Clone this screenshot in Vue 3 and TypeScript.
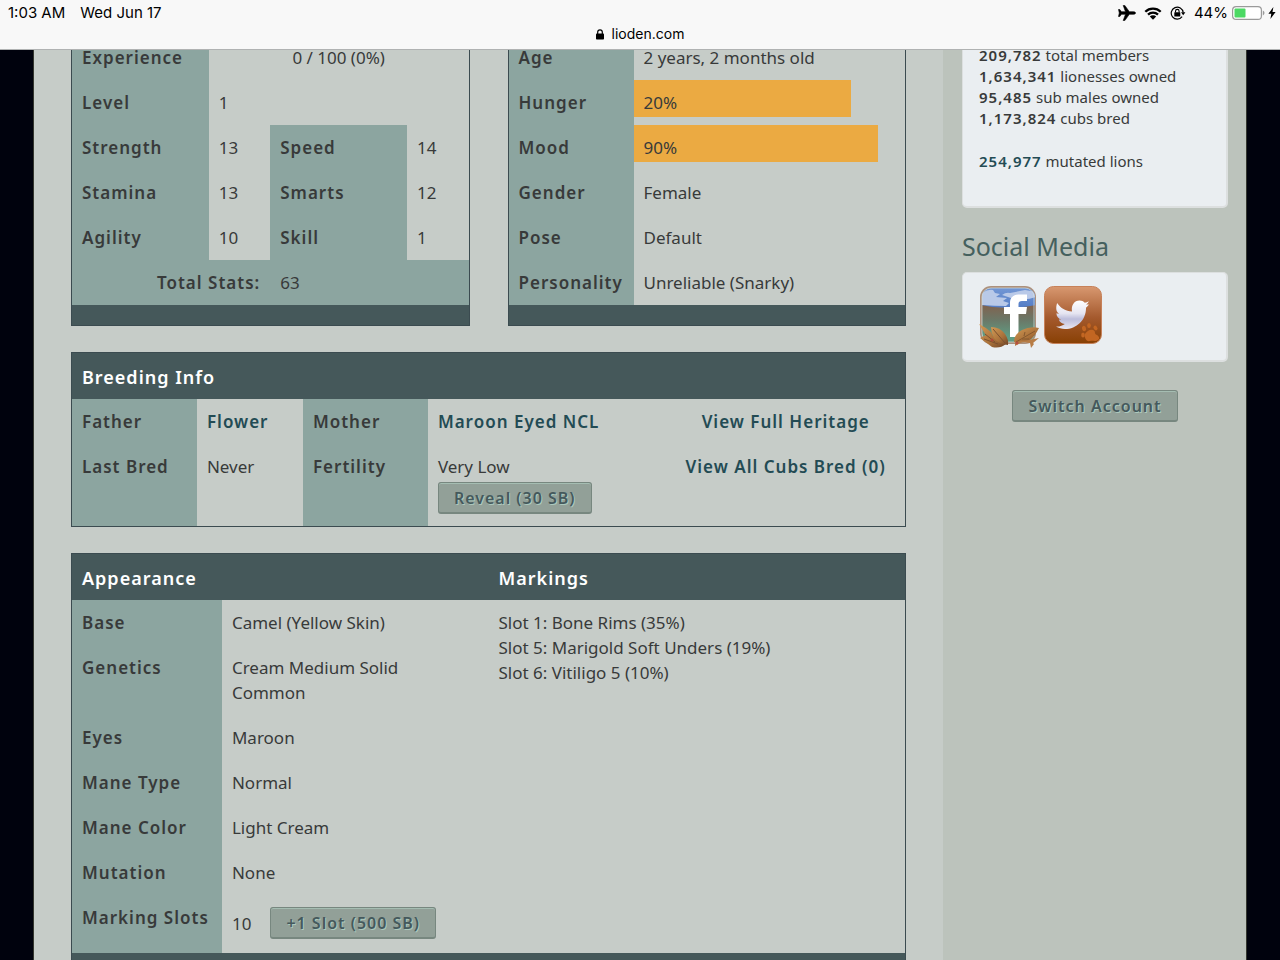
<script setup lang="ts">
interface Row {
  label: string
  value: string
}

interface Gauge extends Row {
  width: number
}

interface StatPair {
  left: Row
  right: Row
}

const stats: StatPair[] = [
  { left: { label: 'Strength', value: '13' }, right: { label: 'Speed', value: '14' } },
  { left: { label: 'Stamina', value: '13' }, right: { label: 'Smarts', value: '12' } },
  { left: { label: 'Agility', value: '10' }, right: { label: 'Skill', value: '1' } },
]

const gauges: Gauge[] = [
  { label: 'Hunger', value: '20%', width: 80 },
  { label: 'Mood', value: '90%', width: 90 },
]

const traits: Row[] = [
  { label: 'Gender', value: 'Female' },
  { label: 'Pose', value: 'Default' },
  { label: 'Personality', value: 'Unreliable (Snarky)' },
]

const appearance: Row[] = [
  { label: 'Genetics', value: 'Cream Medium Solid Common' },
  { label: 'Eyes', value: 'Maroon' },
  { label: 'Mane Type', value: 'Normal' },
  { label: 'Mane Color', value: 'Light Cream' },
  { label: 'Mutation', value: 'None' },
]

const markings: string[] = [
  'Slot 1: Bone Rims (35%)',
  'Slot 5: Marigold Soft Unders (19%)',
  'Slot 6: Vitiligo 5 (10%)',
]

const totals: Row[] = [
  { label: 'total members', value: '209,782' },
  { label: 'lionesses owned', value: '1,634,341' },
  { label: 'sub males owned', value: '95,485' },
  { label: 'cubs bred', value: '1,173,824' },
]
</script>

<template>
  <div class="screen">
    <header class="chrome">
      <div class="status">
        <span class="clock">1:03 AM</span>
        <span>Wed Jun 17</span>
        <div class="indicators">
          <svg class="plane" width="18" height="16" viewBox="0 0 18 16" aria-label="Airplane mode">
            <path d="M17.6 8c0-.8-1.200-1.300-2.400-1.300H11.300L6.800.4H5.200l2.300 6.300H3.500L1.800 4.500H.5L1.300 8 .5 11.500h1.300l1.700-2.200h4L5.200 15.600h1.600l4.500-6.300h3.900c1.200 0 2.400-.5 2.400-1.300z" />
          </svg>
          <svg class="wifi" width="18" height="13" viewBox="0 0 18 13" aria-label="Wi-Fi">
            <path d="M1.300 4.700a11 11 0 0 1 15.400 0M4 7.600a7.100 7.100 0 0 1 10 0" fill="none" stroke="#000" stroke-width="2.300" />
            <path d="M9 12.700 5.800 9.500a4.600 4.600 0 0 1 6.400 0z" />
          </svg>
          <svg class="lock-rotation" width="16" height="14" viewBox="0 0 16 14" aria-label="Rotation lock">
            <path d="M12.100 10.700A6 6 0 1 1 13.200 6.500" fill="none" stroke="#000" stroke-width="1.200" />
            <path d="M11 6.200h4.400l-2.200 3z" />
            <rect x="4.300" y="6.200" width="6" height="4.200" rx=".5" />
            <path d="M5.500 6.500V5.200a1.800 1.800 0 0 1 3.600 0v1.300" fill="none" stroke="#000" stroke-width="1.100" />
          </svg>
          <span>44%</span>
          <svg class="battery" width="33" height="14" viewBox="0 0 33 14" aria-label="Battery charging">
            <rect x=".6" y=".6" width="28.800" height="12.800" rx="3.500" fill="#fff" stroke="#9a9a9a" stroke-width="1.200" />
            <rect x="2.500" y="2.500" width="11" height="9" rx="1" fill="#4cd964" />
            <path d="M30.800 4.600c2.200.8 2.200 4 0 4.800z" fill="#9a9a9a" />
          </svg>
          <svg class="bolt" width="8" height="12" viewBox="0 0 8 12" aria-hidden="true">
            <path d="M5.400 0 .4 6.700h2.900L2.400 12l5.200-7H4.500z" />
          </svg>
        </div>
      </div>
      <div class="address">
        <svg width="8" height="11" viewBox="0 0 8 11" aria-hidden="true">
          <rect y="4.500" width="8" height="6" rx=".8" />
          <path d="M1.700 5V3.100a2.300 2.300 0 0 1 4.600 0V5" fill="none" stroke="#000" stroke-width="1.200" />
        </svg>
        <span>lioden.com</span>
      </div>
    </header>

    <div class="scroller">
      <div class="page">
        <main class="content">
          <div class="pair">
            <section class="panel">
              <table class="stats">
                <colgroup><col class="wide" /><col class="slim" /><col class="wide" /><col class="slim" /></colgroup>
                <tbody>
                  <tr>
                    <th scope="row">Experience</th>
                    <td colspan="3" class="centered">0 / 100 (0%)</td>
                  </tr>
                  <tr>
                    <th scope="row">Level</th>
                    <td colspan="3">1</td>
                  </tr>
                  <tr v-for="pair in stats" :key="pair.left.label">
                    <th scope="row">{{ pair.left.label }}</th>
                    <td>{{ pair.left.value }}</td>
                    <th scope="row">{{ pair.right.label }}</th>
                    <td>{{ pair.right.value }}</td>
                  </tr>
                  <tr class="total">
                    <th scope="row" colspan="2">Total Stats:</th>
                    <td colspan="2">63</td>
                  </tr>
                </tbody>
              </table>
              <div class="foot"></div>
            </section>

            <section class="panel">
              <table class="traits">
                <colgroup><col class="label" /><col /></colgroup>
                <tbody>
                  <tr>
                    <th scope="row">Age</th>
                    <td>2 years, 2 months old</td>
                  </tr>
                  <tr v-for="gauge in gauges" :key="gauge.label">
                    <th scope="row">{{ gauge.label }}</th>
                    <td class="gauge"><div class="bar" :style="{ width: gauge.width + '%' }">{{ gauge.value }}</div></td>
                  </tr>
                  <tr v-for="trait in traits" :key="trait.label">
                    <th scope="row">{{ trait.label }}</th>
                    <td>{{ trait.value }}</td>
                  </tr>
                </tbody>
              </table>
              <div class="foot"></div>
            </section>
          </div>

          <section class="panel">
            <h2 class="title">Breeding Info</h2>
            <table class="breeding">
              <colgroup><col class="label" /><col class="short" /><col class="label" /><col /><col /></colgroup>
              <tbody>
                <tr>
                  <th scope="row">Father</th>
                  <td><a href="#">Flower</a></td>
                  <th scope="row">Mother</th>
                  <td><a href="#">Maroon Eyed NCL</a></td>
                  <td class="centered"><a href="#">View Full Heritage</a></td>
                </tr>
                <tr>
                  <th scope="row">Last Bred</th>
                  <td>Never</td>
                  <th scope="row">Fertility</th>
                  <td class="fertility">Very Low<button type="button" class="button">Reveal (30 SB)</button></td>
                  <td class="centered"><a href="#">View All Cubs Bred (0)</a></td>
                </tr>
              </tbody>
            </table>
          </section>

          <section class="panel">
            <table class="appearance">
              <colgroup><col class="label" /><col class="value" /><col /></colgroup>
              <thead>
                <tr>
                  <th class="title" colspan="2" scope="colgroup">Appearance</th>
                  <th class="title" scope="col">Markings</th>
                </tr>
              </thead>
              <tbody>
                <tr>
                  <th scope="row">Base</th>
                  <td>Camel (Yellow Skin)</td>
                  <td rowspan="7">
                    <div v-for="marking in markings" :key="marking">{{ marking }}</div>
                  </td>
                </tr>
                <tr v-for="row in appearance" :key="row.label">
                  <th scope="row">{{ row.label }}</th>
                  <td class="trait">{{ row.value }}</td>
                </tr>
                <tr>
                  <th scope="row">Marking Slots</th>
                  <td>
                    <div class="slots">10<button type="button" class="button">+1 Slot (500 SB)</button></div>
                  </td>
                </tr>
              </tbody>
            </table>
            <div class="foot"></div>
          </section>
        </main>

        <aside class="sidebar">
          <div class="card totals">
            <div v-for="total in totals" :key="total.label"><b>{{ total.value }}</b> {{ total.label }}</div>
            <div class="mutated"><a href="#">254,977</a> mutated lions</div>
          </div>
          <h3>Social Media</h3>
          <div class="card social">
            <a href="#" aria-label="Facebook">
              <svg width="61" height="64" viewBox="0 0 61 64">
                <defs>
                  <linearGradient id="fb-sky" x1="0" y1="0" x2="0" y2="1"><stop offset="0" stop-color="#7599d6" /><stop offset="1" stop-color="#5079c3" /></linearGradient>
                  <linearGradient id="fb-land" x1="0" y1="0" x2="0" y2="1"><stop offset="0" stop-color="#80624f" /><stop offset=".4" stop-color="#6a7968" /><stop offset=".8" stop-color="#609b82" /></linearGradient>
                  <linearGradient id="leaf" x1="0" y1="0" x2="1" y2="1"><stop offset="0" stop-color="#d39a55" /><stop offset=".6" stop-color="#a9713a" /><stop offset="1" stop-color="#6f4426" /></linearGradient>
                  <clipPath id="fb-clip"><rect x="3" y="2" width="53" height="54" rx="9" /></clipPath>
                </defs>
                <rect x="1" y="0" width="56" height="58" rx="11" fill="#ac907c" />
                <g clip-path="url(#fb-clip)">
                  <rect width="60" height="25" fill="url(#fb-sky)" />
                  <path d="M2 8Q8 3 14 4l2 3 5 1-4 3 11 1-4 3 6 2-3 3q-12 0-25-1zM23 9q4-3 8-2l15-3 11 2v5q-8 3-15 2l-10-1z" fill="#b9c9e8" />
                  <path d="M2 19q26 6 55 0v39H2z" fill="url(#fb-land)" />
                </g>
                <rect x="3" y="2" width="52" height="54" rx="9" fill="none" stroke="#d3dedb" stroke-opacity=".7" />
                <path d="M31 51V28h-6v-7h6v-4c0-6 4-8.500 10-8.500h7V15h-5c-2.500 0-3.500 1-3.500 3v3H48l-1 7h-7.500v23z" fill="#fff" />
                <path d="M0 38q6 3 12 8l6 12-7-2zM1 52q7-5 15-2l11 8q-6 5-14 3z" fill="url(#leaf)" />
                <path d="M12 41q9 0 14 7 4 6 3 11-10-1-14-7-3-5-3-11z" fill="url(#leaf)" />
                <path d="m6 48 10 8m-2-13 12 14m-21-4 14 5" fill="none" stroke="#7a5030" />
                <path d="M60 42q-9-2-17 2-8 4-8 12 10 2 16-2 5-4 9-12z" fill="url(#leaf)" />
                <path d="m36 56 14-2 10-2-6 5 1 1-3 4-1-5-8-1-7 4z" fill="#b77c45" />
                <path d="m37 56 19-11m-11 5 1-4m-3 7 7 0" fill="none" stroke="#85582f" />
                <circle cx="13" cy="54" r="1.500" fill="#ac4937" /><circle cx="38" cy="57" r="1.500" fill="#b74f43" />
              </svg>
            </a>
            <a href="#" aria-label="Twitter">
              <svg width="58" height="58" viewBox="0 0 58 58">
                <defs>
                  <linearGradient id="tw-bg" x1="0" y1="0" x2="0" y2="1"><stop offset="0" stop-color="#d89870" /><stop offset=".55" stop-color="#a4592d" /><stop offset="1" stop-color="#884004" /></linearGradient>
                  <linearGradient id="tw-bird" x1="0" y1="0" x2="0" y2="1"><stop offset="0" stop-color="#fff" /><stop offset=".45" stop-color="#e6e5f1" /><stop offset=".65" stop-color="#bcbddb" /><stop offset="1" stop-color="#e9e8f3" /></linearGradient>
                </defs>
                <rect x=".5" y=".5" width="57" height="57" rx="9" fill="url(#tw-bg)" stroke="#c78159" />
                <path d="M45 18.500q-1.500 2-3 3.200C42.200 34 32.500 43 21 43c-3.300 0-6.500-.9-9-2.500 3.400.3 6.500-.7 8.800-2.500-3-.2-5.200-2-6-4.500h2.600c-3-.8-4.900-3.300-5-6.300l2.700.7c-2.900-2.200-3.600-5.800-2-11 3.600 5.200 8.500 8.200 14.900 8.500-.9-6 2.200-10.800 7.600-10.800 2.100 0 3.800.8 5.200 2.200q2.200-.5 4-1.600-.6 2-2.700 3.400z" fill="url(#tw-bird)" />
                <g fill="#c36622"><path d="M41 48c2-3 5-5 8-4 3 1 1 3 3 4.500 2.500 1 4.500 4 2 5.500-3 2-5 0-8 1-4 1-6-4-5-7z" /><ellipse cx="39" cy="49" rx="1.800" ry="2.500" /><ellipse cx="40" cy="42.500" rx="2" ry="2.700" transform="rotate(-20 40 42.500)" /><ellipse cx="45" cy="39.500" rx="1.800" ry="2.600" /><ellipse cx="51.500" cy="42" rx="1.800" ry="2.500" transform="rotate(-35 51.500 42)" /></g>
              </svg>
            </a>
          </div>
          <button type="button" class="button switch">Switch Account</button>
        </aside>
      </div>
    </div>
  </div>
</template>

<style>
body {
  margin: 0;
  background: #00020d;
}
</style>

<style scoped>
* {
  box-sizing: border-box;
}
.screen {
  display: flex;
  flex-direction: column;
  height: 100vh;
  color: #383a3a;
  font: 17px/25px "Noto Sans", "Open Sans", sans-serif;
}
.chrome {
  position: relative;
  z-index: 1;
  flex: none;
  height: 50px;
  background: #f8f8f8;
  border-bottom: 1px solid #b0b2b2;
  color: #000;
  font: 14px/20px Inter, "Liberation Sans", sans-serif;
}
.status {
  display: flex;
  align-items: center;
  gap: 15px;
  height: 24px;
  padding: 2px 4px 0 8px;
  font-size: 15px;
}
.indicators {
  display: flex;
  align-items: center;
  gap: 8px;
  margin-left: auto;
}
.plane {
  stroke: #000;
  stroke-width: 0.6;
}
.battery {
  margin-left: -4px;
}
.bolt {
  margin-left: -5px;
}
.address {
  display: flex;
  align-items: center;
  justify-content: center;
  gap: 8px;
}
.scroller {
  flex: 1;
  min-height: 0;
  overflow-y: auto;
  scrollbar-width: none;
  padding: 0 33px;
}
.page {
  display: grid;
  grid-template-columns: 3fr 1fr;
  min-height: calc(100% + 15px);
  margin-top: -15px;
  background: #c6ccc8;
  border: solid #34372f;
  border-width: 0 1px;
}
.content {
  display: flex;
  flex-direction: column;
  gap: 26px;
  min-width: 0;
  padding: 0 37px 26px;
}
.pair {
  display: grid;
  grid-template-columns: 1fr 1fr;
  gap: 38px;
}
.panel {
  border: 1px solid #3b4b50;
}
.pair .panel {
  border-top: 0;
}
table {
  width: 100%;
  table-layout: fixed;
  border-collapse: collapse;
}
th,
td {
  padding: 10px;
  text-align: left;
  vertical-align: top;
}
th {
  background: #8ca5a0;
  font-weight: 600;
  letter-spacing: 1px;
  white-space: nowrap;
}
a {
  color: #234b54;
  font-weight: 600;
  letter-spacing: 1px;
  text-decoration: none;
}
.stats .wide {
  width: 34.5%;
}
.stats .slim {
  width: 15.5%;
}
.traits .label {
  width: 125px;
}
.breeding .label {
  width: 15%;
}
.breeding .short {
  width: 106px;
}
.appearance .label {
  width: 18%;
}
.appearance .value {
  width: 32%;
}
.appearance .trait {
  padding-right: 20px;
}
.centered {
  text-align: center;
}
.total th {
  text-align: right;
}
.total td {
  background: #8ca5a0;
}
td.gauge {
  padding: 0;
}
.bar {
  height: 37px;
  padding: 10px 10px 2px;
  margin-bottom: 8px;
  background: #ebaa42;
}
.foot {
  height: 20px;
  background: #45585a;
}
.title {
  margin: 0;
  padding: 12px 10px 9px;
  background: #45585a;
  color: #fff;
  font-size: 18px;
  font-weight: 600;
  line-height: 25px;
  letter-spacing: 1px;
}
.button {
  display: block;
  height: 32px;
  padding: 0 15px;
  background: #92a098;
  border: 1px solid #77877f;
  border-bottom-width: 2px;
  border-radius: 3px;
  box-shadow: inset 0 1px #a5bdb2;
  color: #45595c;
  font: 600 16px/28px "Noto Sans", "Open Sans", sans-serif;
  letter-spacing: 1px;
  text-shadow: 1px 1px #adc9bd;
  white-space: nowrap;
}
.fertility .button {
  margin-top: 3px;
}
.breeding td.fertility {
  padding-bottom: 12px;
}
.slots {
  display: flex;
  align-items: center;
  gap: 19px;
  padding: 2px 0 4px;
}
.sidebar {
  min-width: 0;
  padding: 0 18px 0 19px;
  background: #bcc3bc;
}
.card {
  padding: 13px 16px;
  background: #eaeef1;
  border: 1px solid #dcdfdf;
  border-width: 1px 2px 2px 1px;
  border-radius: 5px;
}
.totals {
  height: 173px;
  padding-top: 9px;
  font-size: 15px;
  line-height: 21px;
}
.totals b {
  font-weight: 600;
  letter-spacing: 1px;
}
.mutated {
  margin-top: 22px;
}
h3 {
  margin: 22px 0 10px;
  color: #45605e;
  font-size: 25px;
  font-weight: 400;
  line-height: 32px;
}
.social {
  display: flex;
  gap: 4px;
  height: 90px;
}
.switch {
  margin: 28px auto 0;
}
</style>
